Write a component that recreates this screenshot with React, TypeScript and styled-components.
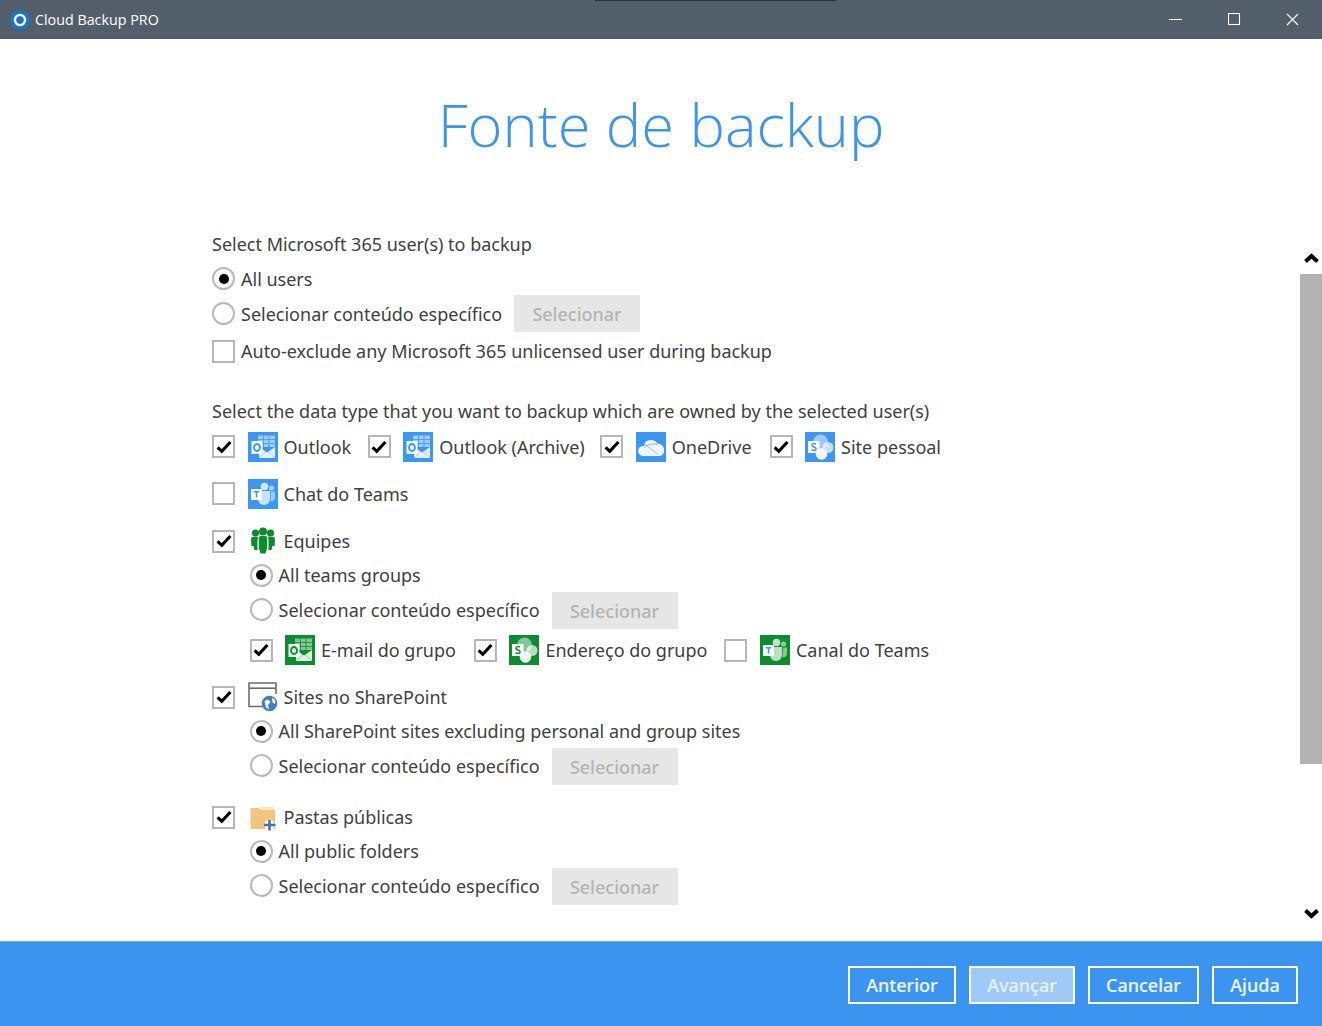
import React from "react";
import styled, { createGlobalStyle } from "styled-components";

const Global = createGlobalStyle`
  html, body { margin: 0; padding: 0; background: #fff; }
  * { box-sizing: border-box; }
  body { font-family: "Noto Sans", "Open Sans", sans-serif; color: #404040; overflow: hidden; }
`;

const Page = styled.div`
  width: 1322px; height: 1026px; display: flex; flex-direction: column; position: relative; overflow: hidden;
`;
const TitleBar = styled.header`
  height: 39px; flex: none; display: flex; align-items: center; background: #535e6b; position: relative;
  padding-left: 10px;
`;
const TopMark = styled.div`
  position: absolute; left: 595px; top: 0; width: 241px; height: 1px; background: #2b2f36;
`;
const AppName = styled.span`
  font: 400 14.3px "Open Sans", sans-serif; color: #fff; margin-left: 5px;
`;
const WinButtons = styled.div`
  margin-left: auto; display: flex; height: 100%;
`;
const WinButton = styled.div`
  width: 58.5px; display: flex; align-items: center; justify-content: center;
  svg { display: block; }
`;
const Main = styled.main`
  flex: 1; display: flex; flex-direction: column; min-height: 0; position: relative;
`;
const Title = styled.h1`
  margin: 0; height: 193px; padding-top: 42px; text-align: center;
  font: 300 59.6px/85px "Open Sans", sans-serif; color: #3b94ef;
`;
const Form = styled.div`
  padding-left: 212px; display: flex; flex-direction: column;
`;
const Heading = styled.div<{ $top?: number; $bottom: number }>`
  height: 24px; line-height: 24px; font-size: 18px;
  margin-top: ${(p) => p.$top ?? 0}px; margin-bottom: ${(p) => p.$bottom}px;
`;
const Row = styled.div<{ $h: number; $indent?: boolean; $lift?: boolean }>`
  height: ${(p) => p.$h}px; display: flex; align-items: center; font-size: 18px;
  padding-left: ${(p) => (p.$indent ? 37.5 : 0)}px; padding-bottom: ${(p) => (p.$lift ? 2 : 0)}px; white-space: nowrap;
`;
const Section = styled.section`
  margin-bottom: 17px;
`;
const SubBlock = styled.div`
  margin-top: 2px;
`;
const GroupRow = styled(Row)`
  margin-top: 6px;
`;
const Item = styled.div<{ $gap: number }>`
  display: flex; align-items: center; margin-right: ${(p) => p.$gap}px;
`;
const Box = styled.span<{ $tight?: boolean; $lift?: boolean }>`
  width: 23px; height: 23px; flex: none; border: 2.75px solid #b6b6b6; background: #fff;
  display: inline-flex; align-items: center; justify-content: center;
  margin-right: ${(p) => (p.$tight ? 6 : 12.5)}px; margin-bottom: ${(p) => (p.$lift ? 1 : 0)}px;
`;
const Radio = styled.span<{ $on?: boolean }>`
  width: 23px; height: 23px; flex: none; border: 2.75px solid #b9b9b9; border-radius: 50%; background: #fff;
  display: inline-flex; align-items: center; justify-content: center; margin-right: 6px;
  &::after { content: ""; width: 10px; height: 10px; border-radius: 50%; background: ${(p) => (p.$on ? "#000" : "transparent")}; }
`;
const IconTile = styled.span<{ $bg?: string }>`
  width: 30px; height: 30px; flex: none; background: ${(p) => p.$bg ?? "transparent"}; margin-right: 6px; display: block;
  svg { display: block; }
`;
const Select = styled.button`
  margin-left: 12px; width: 126px; height: 37px; border: none; background: #e6e6e6; color: #b4b4b4;
  font: 500 18px "Noto Sans", sans-serif; padding: 0; align-self: flex-start;
`;
const Rail = styled.div`
  position: absolute; right: 0; top: 214px; width: 22px; height: 666px; display: flex; flex-direction: column; align-items: center;
`;
const Thumb = styled.div`
  width: 22px; height: 490px; background: #b2b2b2; margin-top: 11px; flex: none;
`;
const ArrowSlot = styled.div<{ $end?: boolean }>`
  height: 10px; flex: none; margin-top: ${(p) => (p.$end ? "auto" : "0")};
  svg { display: block; }
`;
const Footer = styled.footer`
  height: 85px; flex: none; background: #3b94ef; border-top: 1px solid #6cb0f4;
  display: flex; align-items: center; justify-content: flex-end; padding: 2px 24px 0 0; gap: 13px;
`;
const FootButton = styled.button<{ $active?: boolean; $w: number }>`
  height: 38px; width: ${(p) => p.$w}px; border: 2.5px solid #fff; padding: 0;
  background: ${(p) => (p.$active ? "#9fcaf8" : "transparent")};
  color: ${(p) => (p.$active ? "#e4f0fd" : "#eaf4fe")};
  font: 500 18px "Noto Sans", sans-serif; -webkit-text-stroke: 0.2px currentColor;
`;
const Spacer = styled.div`
  height: 9px; flex: none;
`;

const BLUE = "#3b97f3";
const GREEN = "#0b8c2e";

const Check = () => (
  <svg width="16" height="14" viewBox="0 0 16 14">
    <path d="M1.6 7.4 L5.8 11.4 L14.4 2" fill="none" stroke="#000" strokeWidth="3.1" />
  </svg>
);

const OutlookIcon = ({ bg }: { bg: string }) => (
  <svg width="30" height="30" viewBox="0 0 30 30">
    <path d="M10 3.5 H27 V15 H10 Z" fill="#fff" opacity=".5" />
    <path d="M15.5 3.5 V15 M21 3.5 V15 M10 7.5 H27 M10 11.5 H27" stroke={bg} strokeWidth=".8" />
    <path d="M11 15 L19 20.5 L27 15 V26 H11 Z" fill="#fff" opacity=".85" />
    <path d="M11 26 L18 19.5 M27 26 L20 19.5" stroke={bg} strokeWidth=".7" opacity=".45" />
    <rect x="3.5" y="9" width="11" height="13" fill="#fff" opacity=".92" />
    <ellipse cx="9" cy="15.5" rx="3" ry="3.5" fill="none" stroke={bg} strokeWidth="1.8" />
  </svg>
);
const TeamsIcon = ({ letter }: { letter: string }) => (
  <svg width="30" height="30" viewBox="0 0 30 30">
    <circle cx="16.5" cy="7.5" r="3.8" fill="#fff" opacity=".75" />
    <circle cx="23.5" cy="9" r="2.6" fill="#fff" opacity=".55" />
    <path d="M10 12 H22 V20 A6 6 0 0 1 10 20 Z" fill="#fff" opacity=".72" />
    <path d="M22.8 12.5 H27 V18 A4 4 0 0 1 22.5 22.5 Z" fill="#fff" opacity=".5" />
    <rect x="3" y="10" width="11" height="11" fill="#fff" />
    <path d="M5.7 12.7 H11.3 M8.5 12.7 V18.6" stroke={letter} strokeWidth="1.5" fill="none" />
  </svg>
);
const OneDriveIcon = ({ bg }: { bg: string }) => (
  <svg width="30" height="30" viewBox="0 0 30 30">
    <path d="M8.5 11 A8 7.5 0 0 1 21.5 11.5 A6.5 6 0 0 1 28 18 A5 5 0 0 1 24 24 H7 A5.5 5.5 0 0 1 2 18.5 A5.5 5.5 0 0 1 8.5 14 Z" fill="#fff" opacity=".92" />
    <path d="M8 11.5 L22 22.5 M8 16 Q13 10.5 21 12.5" stroke={bg} strokeWidth="1" opacity=".55" fill="none" />
  </svg>
);
const SharePointIcon = ({ bg }: { bg: string }) => (
  <svg width="30" height="30" viewBox="0 0 30 30">
    <circle cx="15.5" cy="10" r="7.5" fill="#fff" opacity=".5" />
    <circle cx="23" cy="15.5" r="5.5" fill="#fff" opacity=".7" />
    <circle cx="16.5" cy="22" r="5.8" fill="#fff" opacity=".92" />
    <rect x="3" y="9" width="11.5" height="12" fill="#fff" />
    <path d="M11 12.3 C9.8 11.2 6.9 11.3 6.9 13.2 C6.9 15.4 11.1 14.6 11.1 16.8 C11.1 18.8 8 18.8 6.6 17.6" fill="none" stroke={bg} strokeWidth="1.5" />
  </svg>
);
const PeopleIcon = () => (
  <svg width="30" height="30" viewBox="0 0 30 30">
    <g fill={GREEN}>
      <circle cx="7.5" cy="7" r="3.6" />
      <circle cx="15" cy="5.5" r="4" />
      <circle cx="22.5" cy="7" r="3.6" />
      <path d="M3 13 Q3 10.8 5.5 10.8 H10 L9.5 14 V24 H6.5 L5.5 20 H3.4 Z" />
      <path d="M27 13 Q27 10.8 24.5 10.8 H20 L20.5 14 V24 H23.5 L24.5 20 H26.6 Z" />
      <path d="M10.8 12 Q10.8 10 13 10 H17 Q19.2 10 19.2 12 V22 L17.5 27.5 H12.5 L10.8 22 Z" />
    </g>
  </svg>
);
const SitesIcon = () => (
  <svg width="30" height="30" viewBox="0 0 30 30">
    <path d="M28 12 V1 H1 V24.5 H15" fill="none" stroke="#6d6d6d" strokeWidth="1.6" />
    <path d="M1 6.2 H28" stroke="#6d6d6d" strokeWidth="1.6" />
    <circle cx="21.5" cy="21.5" r="7.8" fill="#3f7fc4" />
    <path d="M16.5 19 L20 17.5 L22.5 20 L20 23 L21 27.5 L18 25.5 Z M24 15.5 L27.5 18.5 L27 22 L24.5 20.5 Z" fill="#fff" />
  </svg>
);
const FolderIcon = () => (
  <svg width="30" height="30" viewBox="0 0 30 30">
    <path d="M2.5 6 H11 L13 8 H27 V27 H2.5 Z" fill="#f1c57f" />
    <path d="M13 5 H25.5 V8 H13 Z" fill="#f8e3bd" />
    <circle cx="21.5" cy="23" r="5" fill="#fff" />
    <path d="M21.5 18 V28.5 M16 23 H27.5" stroke="#3c74b4" strokeWidth="2.6" />
  </svg>
);

type ServiceProps = { on?: boolean; lift?: boolean; gap?: number; bg?: string; icon: React.ReactNode; label: string };
const Service = ({ on, lift, gap = 18, bg, icon, label }: ServiceProps) => (
  <Item $gap={gap}>
    <Box $lift={lift}>{on && <Check />}</Box>
    <IconTile $bg={bg}>{icon}</IconTile>
    {label}
  </Item>
);
const RadioLine = ({ on, h, indent, label }: { on?: boolean; h: number; indent?: boolean; label: string }) => (
  <Row $h={h} $indent={indent}>
    <Radio $on={on} />
    {label}
  </Row>
);
const SelectLine = ({ indent }: { indent?: boolean }) => (
  <Row $h={37} $indent={indent} $lift={indent}>
    <Radio />
    Selecionar conteúdo específico
    <Select>Selecionar</Select>
  </Row>
);

export default function App() {
  return (
    <Page>
      <Global />
      <TitleBar>
        <TopMark />
        <svg width="20" height="20" viewBox="0 0 20 20">
          <circle cx="10" cy="10" r="10" fill="#1c74bd" />
          <circle cx="10" cy="10" r="5" fill="none" stroke="#e8f2fb" strokeWidth="2.6" />
          <circle cx="10" cy="10" r="3.4" fill="#2a6fae" />
        </svg>
        <AppName>Cloud Backup PRO</AppName>
        <WinButtons>
          <WinButton>
            <svg width="13" height="13" viewBox="0 0 13 13"><path d="M0 6.5 H13" stroke="#fff" strokeWidth="1" /></svg>
          </WinButton>
          <WinButton>
            <svg width="13" height="13" viewBox="0 0 13 13"><rect x="0.5" y="0.5" width="11" height="11" fill="none" stroke="#fff" strokeWidth="1.1" /></svg>
          </WinButton>
          <WinButton>
            <svg width="13" height="13" viewBox="0 0 13 13"><path d="M1 1 L12 12 M12 1 L1 12" stroke="#fff" strokeWidth="1.1" /></svg>
          </WinButton>
        </WinButtons>
      </TitleBar>
      <Main>
        <Title>Fonte de backup</Title>
        <Form>
          <Heading $bottom={6}>Select Microsoft 365 user(s) to backup</Heading>
          <RadioLine on h={33} label="All users" />
          <SelectLine />
          <Row $h={38}>
            <Box $tight />
            Auto-exclude any Microsoft 365 unlicensed user during backup
          </Row>
          <Heading $top={29} $bottom={0}>Select the data type that you want to backup which are owned by the selected user(s)</Heading>
          <Spacer />
          <Section>
            <Row $h={30}>
              <Service on lift gap={16.5} bg={BLUE} icon={<OutlookIcon bg={BLUE} />} label="Outlook" />
              <Service on lift gap={15.5} bg={BLUE} icon={<OutlookIcon bg={BLUE} />} label="Outlook (Archive)" />
              <Service on lift gap={18} bg={BLUE} icon={<OneDriveIcon bg={BLUE} />} label="OneDrive" />
              <Service on lift bg={BLUE} icon={<SharePointIcon bg={BLUE} />} label="Site pessoal" />
            </Row>
          </Section>
          <Section>
            <Row $h={30}>
              <Service lift bg={BLUE} icon={<TeamsIcon letter={BLUE} />} label="Chat do Teams" />
            </Row>
          </Section>
          <Section>
            <Row $h={30}>
              <Service on icon={<PeopleIcon />} label="Equipes" />
            </Row>
            <SubBlock>
              <RadioLine on indent h={34} label="All teams groups" />
              <SelectLine indent />
              <GroupRow $h={30} $indent>
                <Service on gap={18} bg={GREEN} icon={<OutlookIcon bg={GREEN} />} label="E-mail do grupo" />
                <Service on gap={17} bg={GREEN} icon={<SharePointIcon bg={GREEN} />} label="Endereço do grupo" />
                <Service bg={GREEN} icon={<TeamsIcon letter={BLUE} />} label="Canal do Teams" />
              </GroupRow>
            </SubBlock>
          </Section>
          <Section>
            <Row $h={30}>
              <Service on icon={<SitesIcon />} label="Sites no SharePoint" />
            </Row>
            <SubBlock>
              <RadioLine on indent h={34} label="All SharePoint sites excluding personal and group sites" />
              <SelectLine indent />
            </SubBlock>
          </Section>
          <Section>
            <Row $h={30}>
              <Service on icon={<FolderIcon />} label="Pastas públicas" />
            </Row>
            <SubBlock>
              <RadioLine on indent h={34} label="All public folders" />
              <SelectLine indent />
            </SubBlock>
          </Section>
        </Form>
        <Rail>
          <ArrowSlot>
            <svg width="15" height="10" viewBox="0 0 15 10"><path d="M1.5 8.5 L7.5 3 L13.5 8.5" fill="none" stroke="#000" strokeWidth="4" /></svg>
          </ArrowSlot>
          <Thumb />
          <ArrowSlot $end>
            <svg width="15" height="10" viewBox="0 0 15 10"><path d="M1.5 1.5 L7.5 7 L13.5 1.5" fill="none" stroke="#000" strokeWidth="4" /></svg>
          </ArrowSlot>
        </Rail>
      </Main>
      <Footer>
        <FootButton $w={108}>Anterior</FootButton>
        <FootButton $w={106} $active>Avançar</FootButton>
        <FootButton $w={111}>Cancelar</FootButton>
        <FootButton $w={86}>Ajuda</FootButton>
      </Footer>
    </Page>
  );
}
